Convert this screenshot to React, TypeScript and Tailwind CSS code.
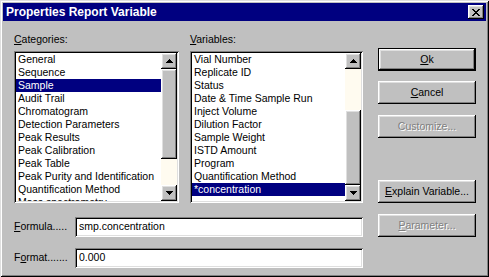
import React from "react";

const categories = [
  "General",
  "Sequence",
  "Sample",
  "Audit Trail",
  "Chromatogram",
  "Detection Parameters",
  "Peak Results",
  "Peak Calibration",
  "Peak Table",
  "Peak Purity and Identification",
  "Quantification Method",
  "Mass spectrometry",
];

const variables = [
  "Vial Number",
  "Replicate ID",
  "Status",
  "Date & Time Sample Run",
  "Inject Volume",
  "Dilution Factor",
  "Sample Weight",
  "ISTD Amount",
  "Program",
  "Quantification Method",
  "*concentration",
];

const raised =
  "bg-[#c0c0c0] shadow-[inset_-1px_-1px_0_#000000,inset_1px_1px_0_#ffffff,inset_-2px_-2px_0_#808080,inset_2px_2px_0_#dfdfdf]";
const sunken =
  "bg-white shadow-[inset_1px_1px_0_#808080,inset_-1px_-1px_0_#ffffff,inset_2px_2px_0_#000000,inset_-2px_-2px_0_#dfdfdf]";

function Arrow({ down }: { down?: boolean }) {
  const rows = [1, 3, 5, 7];
  const list = down ? [...rows].reverse() : rows;
  return (
    <svg width="7" height="4" viewBox="0 0 7 4" shapeRendering="crispEdges">
      {list.map((w, i) => (
        <rect key={i} x={(7 - w) / 2} y={i} width={w} height={1} fill="#000" />
      ))}
    </svg>
  );
}

function ScrollBar({ track1, thumb }: { track1: number; thumb: number }) {
  return (
    <div className="flex w-[16px] flex-col h-full">
      <div className={`${raised} flex h-[16px] w-[16px] shrink-0 items-center justify-center`}>
        <Arrow />
      </div>
      <div className="shrink-0 bg-[#fffbf0]" style={{ height: track1 }} />
      <div className={`${raised} shrink-0`} style={{ height: thumb }} />
      <div className="flex-1 bg-[#fffbf0]" />
      <div className={`${raised} flex h-[16px] w-[16px] shrink-0 items-center justify-center`}>
        <Arrow down />
      </div>
    </div>
  );
}

function ListBox({
  items,
  selected,
  width,
  track1,
  thumb,
}: {
  items: string[];
  selected: number;
  width: number;
  track1: number;
  thumb: number;
}) {
  return (
    <div className={`${sunken} flex h-[152px] p-[2px]`} style={{ width }}>
      <div className="flex-1 overflow-hidden">
        {items.map((it, i) => (
          <div
            key={it}
            className={`h-[13px] whitespace-nowrap pl-[2px] leading-[13px] ${
              i === selected ? "bg-[#000080] text-white" : ""
            }`}
          >
            {it}
          </div>
        ))}
      </div>
      <ScrollBar track1={track1} thumb={thumb} />
    </div>
  );
}

function Button({
  children,
  def,
  disabled,
  className = "",
}: {
  children: React.ReactNode;
  def?: boolean;
  disabled?: boolean;
  className?: string;
}) {
  return (
    <div
      className={`h-[23px] w-[98px] ${def ? "border border-black" : ""} ${className}`}
    >
      <div
        className={`${raised} flex h-full w-full items-center justify-center ${
          disabled ? "text-[#808080] [text-shadow:1px_1px_0_#ffffff]" : ""
        }`}
      >
        {children}
      </div>
    </div>
  );
}

export default function App() {
  return (
    <div className="h-[277px] w-[489px] overflow-hidden bg-[#c0c0c0] p-[3px] font-['Liberation_Sans',Arial,sans-serif] text-[10.5px] text-black shadow-[inset_1px_1px_0_#dfdfdf,inset_-1px_-1px_0_#000000,inset_2px_2px_0_#ffffff,inset_-2px_-2px_0_#808080]">
      {/* Title bar */}
      <div className="flex h-[18px] items-center justify-between bg-[#000080] pl-[3px] pr-[2px]">
        <span className="text-[12px] font-bold text-white">Properties Report Variable</span>
        <div className={`${raised} flex h-[14px] w-[16px] items-center justify-center pr-[1px]`}>
          <svg width="8" height="7" viewBox="0 0 8 7" shapeRendering="crispEdges">
            <path
              d="M0 0h2v1H0zM6 0h2v1H6zM1 1h2v1H1zM5 1h2v1H5zM2 2h4v1H2zM3 3h2v1H3zM2 4h4v1H2zM1 5h2v1H1zM5 5h2v1H5zM0 6h2v1H0zM6 6h2v1H6z"
              fill="#000"
            />
          </svg>
        </div>
      </div>

      {/* Body */}
      <div className="flex pl-[11px]">
        <div className="w-[349px] pt-[12px]">
          <div className="flex gap-[11px]">
            <div className="w-[165px]">
              <div className="h-[13px] leading-[13px]">
                <span className="underline">C</span>ategories:
              </div>
              <div className="mt-[5px]">
                <ListBox items={categories} selected={2} width={165} track1={0} thumb={90} />
              </div>
            </div>
            <div className="w-[173px]">
              <div className="h-[13px] leading-[13px]">
                <span className="underline">V</span>ariables:
              </div>
              <div className="mt-[5px]">
                <ListBox items={variables} selected={10} width={173} track1={41} thumb={75} />
              </div>
            </div>
          </div>

          <div className="mt-[14px] flex items-center">
            <div className="w-[61px]">
              <span className="underline">F</span>ormula.....
            </div>
            <div className={`${sunken} flex h-[20px] w-[288px] items-center px-[4px]`}>
              smp.concentration
            </div>
          </div>
          <div className="mt-[11px] flex items-center">
            <div className="w-[61px]">
              F<span className="underline">o</span>rmat.......
            </div>
            <div className={`${sunken} flex h-[20px] w-[288px] items-center px-[4px]`}>
              0.000
            </div>
          </div>
        </div>

        {/* Buttons */}
        <div className="ml-[15px] mt-[27px] flex flex-col">
          <Button def>
            <span className="underline">O</span>k
          </Button>
          <Button className="mt-[10px]">
            <span className="underline">C</span>ancel
          </Button>
          <Button className="mt-[11px]" disabled>
            Customize...
          </Button>
          <Button className="mt-[42px]">
            <span className="underline">E</span>xplain Variable...
          </Button>
          <Button className="mt-[11px]" disabled>
            <span className="underline">P</span>arameter...
          </Button>
        </div>
      </div>
    </div>
  );
}
